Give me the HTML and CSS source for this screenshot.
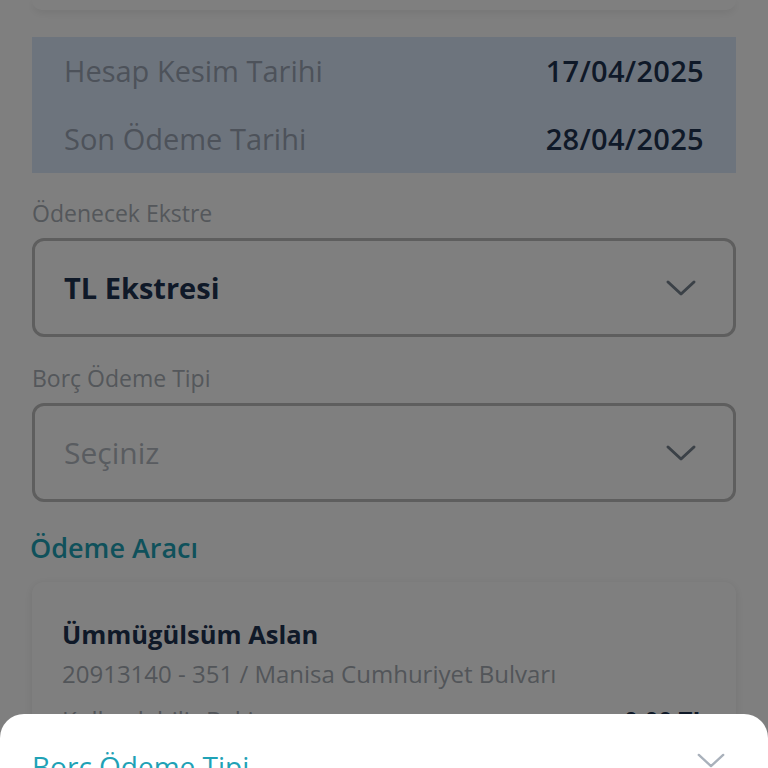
FILE: index.html
```
<!DOCTYPE html>
<html lang="tr">
<head>
<meta charset="utf-8">
<title>Borç Ödeme</title>
<link rel="stylesheet" href="styles.css">
</head>
<body>
<div class="page">
  <div class="card-top"></div>
  <div class="info">
    <div class="info-row"><span class="info-label">Hesap Kesim Tarihi</span><span class="info-value">17/04/2025</span></div>
    <div class="info-row"><span class="info-label">Son Ödeme Tarihi</span><span class="info-value">28/04/2025</span></div>
  </div>
  <div class="field">
    <div class="field-label">Ödenecek Ekstre</div>
    <div class="select">
      <span class="select-value">TL Ekstresi</span>
      <svg class="chev" viewBox="0 0 32 18" width="32" height="18"><path d="M3 3 L16 15 L29 3" fill="none" stroke="currentColor" stroke-width="3" stroke-linecap="round" stroke-linejoin="round"/></svg>
    </div>
  </div>
  <div class="field">
    <div class="field-label">Borç Ödeme Tipi</div>
    <div class="select">
      <span class="select-placeholder">Seçiniz</span>
      <svg class="chev" viewBox="0 0 32 18" width="32" height="18"><path d="M3 3 L16 15 L29 3" fill="none" stroke="currentColor" stroke-width="3" stroke-linecap="round" stroke-linejoin="round"/></svg>
    </div>
  </div>
  <h2 class="section-title">Ödeme Aracı</h2>
  <div class="account">
    <div class="account-name">Ümmügülsüm Aslan</div>
    <div class="account-sub">20913140 - 351 / Manisa Cumhuriyet Bulvarı</div>
    <div class="account-row"><span class="account-label">Kullanılabilir Bakiye</span><span class="account-amount">0,00 TL</span></div>
  </div>
</div>
<div class="overlay"></div>
<div class="sheet">
  <div class="sheet-head">
    <span class="sheet-title">Borç Ödeme Tipi</span>
    <svg class="sheet-chev" viewBox="0 0 32 18" width="30" height="17"><path d="M3 3 L16 15 L29 3" fill="none" stroke="currentColor" stroke-width="2.5" stroke-linecap="round" stroke-linejoin="round"/></svg>
  </div>
</div>
</body>
</html>
```
FILE: styles.css
```
* { box-sizing: border-box; }
html, body { margin: 0; padding: 0; }
body {
  width: 768px;
  height: 768px;
  overflow: hidden;
  background: #ffffff;
  font-family: "Open Sans", "Noto Sans", sans-serif;
  color: #1e3350;
}
.page {
  padding: 0 32px;
}
.card-top {
  height: 10px;
  background: #ffffff;
  border-radius: 0 0 12px 12px;
  box-shadow: 0 3px 8px rgba(0,0,0,0.08);
}
.info {
  margin-top: 27px;
  background: #dbe9fb;
  padding: 0 32px;
  display: flex;
  flex-direction: column;
}
.info-row {
  height: 68px;
  display: flex;
  align-items: center;
  justify-content: space-between;
}
.info-label {
  font-size: 29px;
  color: #9aa5b4;
  font-weight: 400;
  margin-top: -2px;
}
.info-value {
  font-size: 29px;
  font-weight: 600;
  color: #1e3350;
  letter-spacing: 0.3px;
  margin-top: -2px;
}
.field { margin-top: 25px; }
.field + .field { margin-top: 26px; }
.field-label {
  font-size: 23px;
  line-height: 30px;
  color: #a9afb6;
  margin-bottom: 10px;
}
.select {
  height: 99px;
  border: 3px solid #bcbcbc;
  border-radius: 12px;
  display: flex;
  align-items: center;
  justify-content: space-between;
  padding: 0 36px 0 29px;
}
.select-value {
  font-size: 29px;
  font-weight: 700;
  color: #1e3350;
}
.select-placeholder {
  font-size: 30px;
  color: #b3b9c1;
}
.chev { color: #76828f; display: block; }
.section-title {
  margin: 28px 0 0 -2px;
  font-size: 27px;
  line-height: 36px;
  font-weight: 600;
  color: #1fa2b6;
}
.account {
  margin-top: 16px;
  background: #ffffff;
  border-radius: 12px;
  box-shadow: 0 2px 10px rgba(0,0,0,0.10);
  padding: 35px 30px 30px;
}
.account-name {
  font-size: 25.5px;
  line-height: 34px;
  font-weight: 700;
  color: #1e3350;
}
.account-sub {
  margin-top: 7px;
  font-size: 24px;
  line-height: 32px;
  color: #a5abb3;
}
.account-row {
  margin-top: 14px;
  display: flex;
  justify-content: space-between;
  font-size: 24px;
  line-height: 32px;
}
.account-label { color: #a5abb3; }
.account-amount { font-weight: 700; color: #1e3350; }
.overlay {
  position: fixed;
  inset: 0;
  background: rgba(0,0,0,0.5);
}
.sheet {
  position: fixed;
  left: 0;
  right: 0;
  top: 714px;
  height: 200px;
  background: #ffffff;
  border-radius: 24px 24px 0 0;
  padding: 34px 42px 0 32px;
}
.sheet-head {
  display: flex;
  justify-content: space-between;
  align-items: flex-start;
}
.sheet-title {
  font-size: 28px;
  line-height: 36px;
  font-weight: 500;
  color: #1fa2b6;
}
.sheet-chev { color: #a9b1bb; display: block; margin-top: 4px; }
```
